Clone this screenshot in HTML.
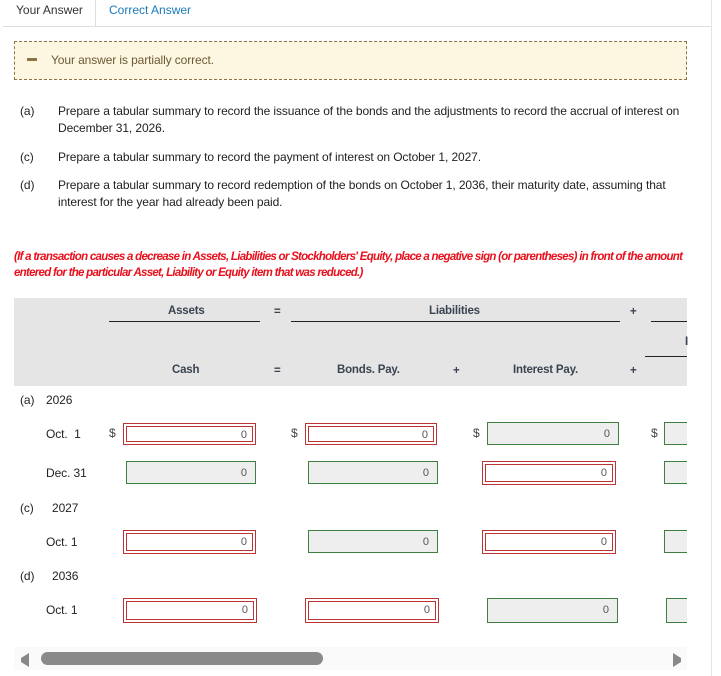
<!DOCTYPE html>
<html><head><meta charset="utf-8"><style>
body{margin:0;width:721px;height:676px;background:#fff;font-family:"Liberation Sans",sans-serif;color:#333;position:relative;overflow:hidden}
.a{position:absolute;white-space:nowrap}
.t{font-size:12px;letter-spacing:-0.1px;color:#222}
.red{color:#e8101c;font-weight:bold;font-style:italic;font-size:11.5px;letter-spacing:-0.72px}
.h{font-size:11.5px;font-weight:bold;color:#3a4450;letter-spacing:-0.2px}
.ir{position:absolute;height:22px;border:1px solid #b33;box-sizing:border-box;background:#fff}
.ir:after{content:"";position:absolute;left:2px;top:2px;right:2px;bottom:2px;border:1px solid #b33}
.ig{position:absolute;height:23px;border:1px solid #3f7f3f;box-sizing:border-box;background:#eee}
.v{position:absolute;right:8px;top:5px;font-size:11px;color:#555}
.d{position:absolute;font-size:12px;color:#444}
.l{position:absolute;height:1px;background:#222}
</style></head><body>
<div class="a" style="left:16px;top:3px;font-size:12px;color:#333">Your Answer</div>
<div class="a" style="left:95px;top:0;width:1px;height:27px;background:#ddd"></div>
<div class="a" style="left:109px;top:3px;font-size:12px;color:#1a7ab8">Correct Answer</div>
<div class="a" style="left:3px;top:26px;width:708px;height:1px;background:#ddd"></div>
<div class="a" style="left:711px;top:0;width:1px;height:676px;background:#e4e4e4"></div>
<div class="a" style="left:14px;top:41px;width:673px;height:39px;box-sizing:border-box;border:1px dashed #8a7448;background:#fdf6e0"></div>
<div class="a" style="left:27px;top:58px;width:10px;height:3px;background:#8a7448"></div>
<div class="a t" style="left:51px;top:53px;color:#6b5a35">Your answer is partially correct.</div>

<div class="a t" style="left:20px;top:104px">(a)</div>
<div class="a t" style="left:58px;top:104px">Prepare a tabular summary to record the issuance of the bonds and the adjustments to record the accrual of interest on</div>
<div class="a t" style="left:58px;top:121px">December 31, 2026.</div>
<div class="a t" style="left:20px;top:150px">(c)</div>
<div class="a t" style="left:58px;top:150px">Prepare a tabular summary to record the payment of interest on October 1, 2027.</div>
<div class="a t" style="left:20px;top:178px">(d)</div>
<div class="a t" style="left:58px;top:178px">Prepare a tabular summary to record redemption of the bonds on October 1, 2036, their maturity date, assuming that</div>
<div class="a t" style="left:58px;top:195px">interest for the year had already been paid.</div>
<div class="a red" style="left:14px;top:251px">(If a transaction causes a decrease in Assets, Liabilities or Stockholders' Equity, place a negative sign (or parentheses) in front of the amount</div>
<div class="a red" style="left:14px;top:267px">entered for the particular Asset, Liability or Equity item that was reduced.)</div>

<div class="a" style="left:14px;top:298px;width:673px;height:88px;background:#e5e5e5"></div>
<div class="a h" style="left:168px;top:305px">Assets</div>
<div class="l" style="left:109px;top:321px;width:151px"></div>
<div class="a h" style="left:274px;top:306px">=</div>
<div class="a h" style="left:429px;top:305px">Liabilities</div>
<div class="l" style="left:291px;top:321px;width:329px"></div>
<div class="a h" style="left:630px;top:306px">+</div>
<div class="l" style="left:651px;top:321px;width:36px"></div>
<div class="a h" style="left:685px;top:336px">I</div>
<div class="l" style="left:645px;top:356px;width:42px"></div>
<div class="a h" style="left:172px;top:364px">Cash</div>
<div class="a h" style="left:274px;top:365px">=</div>
<div class="a h" style="left:337px;top:364px">Bonds. Pay.</div>
<div class="a h" style="left:453px;top:365px">+</div>
<div class="a h" style="left:513px;top:364px">Interest Pay.</div>
<div class="a h" style="left:630px;top:365px">+</div>

<div class="a t" style="left:20px;top:393px">(a)</div><div class="a t" style="left:46px;top:393px">2026</div>
<div class="a t" style="left:46px;top:427px">Oct.&nbsp; 1</div>
<div class="d" style="left:109px;top:426px">$</div><div class="ir" style="left:123px;top:423px;width:133px"><span class="v">0</span></div>
<div class="d" style="left:291px;top:426px">$</div><div class="ir" style="left:305px;top:423px;width:132px"><span class="v">0</span></div>
<div class="d" style="left:473px;top:426px">$</div><div class="ig" style="left:487px;top:422px;width:132px"><span class="v">0</span></div>
<div class="d" style="left:651px;top:426px">$</div><div class="ig" style="left:664px;top:422px;width:40px"></div>

<div class="a t" style="left:46px;top:466px">Dec. 31</div>
<div class="ig" style="left:126px;top:461px;width:130px"><span class="v">0</span></div>
<div class="ig" style="left:308px;top:461px;width:130px"><span class="v">0</span></div>
<div class="ir" style="left:482px;top:461px;width:134px;height:24px"><span class="v">0</span></div>
<div class="ig" style="left:664px;top:461px;width:40px"></div>

<div class="a t" style="left:20px;top:501px">(c)</div><div class="a t" style="left:52px;top:501px">2027</div>
<div class="a t" style="left:46px;top:535px">Oct. 1</div>
<div class="ir" style="left:123px;top:530px;width:133px;height:24px"><span class="v">0</span></div>
<div class="ig" style="left:308px;top:530px;width:130px"><span class="v">0</span></div>
<div class="ir" style="left:482px;top:530px;width:134px;height:24px"><span class="v">0</span></div>
<div class="ig" style="left:664px;top:530px;width:40px"></div>

<div class="a t" style="left:20px;top:569px">(d)</div><div class="a t" style="left:52px;top:569px">2036</div>
<div class="a t" style="left:46px;top:603px">Oct. 1</div>
<div class="ir" style="left:123px;top:598px;width:134px;height:25px"><span class="v">0</span></div>
<div class="ir" style="left:305px;top:598px;width:134px;height:25px"><span class="v">0</span></div>
<div class="ig" style="left:487px;top:598px;width:131px;height:25px"><span class="v">0</span></div>
<div class="ig" style="left:666px;top:598px;width:40px;height:25px"></div>
<div class="a" style="left:687px;top:380px;width:24px;height:296px;background:#fff"></div>

<div class="a" style="left:14px;top:647px;width:673px;height:23px;background:#fafafa"></div>
<svg class="a" style="left:19px;top:652px" width="12" height="16"><path d="M10 1 L10 15 L2 10 L2 6 Z" fill="#888"/></svg>
<div class="a" style="left:41px;top:652px;width:282px;height:13px;border-radius:7px;background:#8a8a8a"></div>
<svg class="a" style="left:671px;top:652px" width="12" height="16"><path d="M2 1 L2 15 L10 10 L10 6 Z" fill="#888"/></svg>
</body></html>
